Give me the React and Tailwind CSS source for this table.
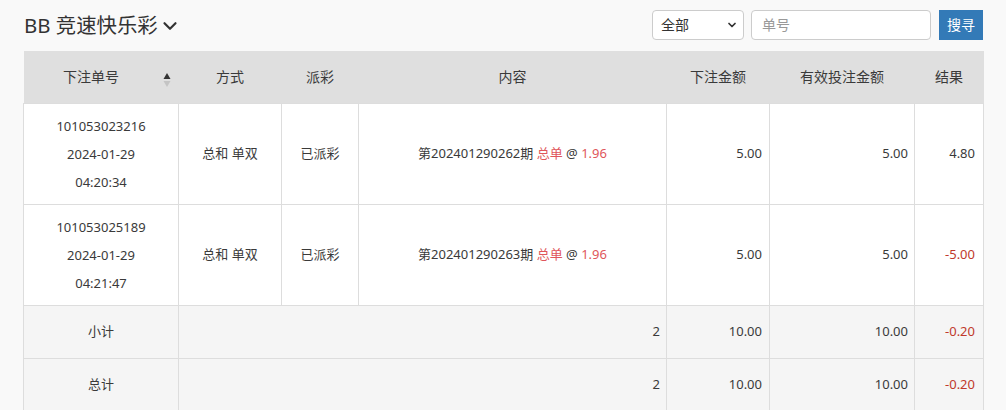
import { ChevronDown } from 'lucide-react';

const rows = [
  {
    id: '101053023216',
    date: '2024-01-29',
    time: '04:20:34',
    way: '总和 单双',
    status: '已派彩',
    issue: '第202401290262期',
    amount: '5.00',
    valid: '5.00',
    result: '4.80',
  },
  {
    id: '101053025189',
    date: '2024-01-29',
    time: '04:21:47',
    way: '总和 单双',
    status: '已派彩',
    issue: '第202401290263期',
    amount: '5.00',
    valid: '5.00',
    result: '-5.00',
  },
];

const totals = [
  { label: '小计', count: '2', amount: '10.00', valid: '10.00', result: '-0.20' },
  { label: '总计', count: '2', amount: '10.00', valid: '10.00', result: '-0.20' },
];

function SortIcon() {
  return (
    <svg width="8" height="16" viewBox="0 0 8 16" className="inline-block">
      <path d="M4 1 L7.5 7 L0.5 7 Z" fill="#333" />
      <path d="M4 15 L7.5 9 L0.5 9 Z" fill="#c4c4c4" />
    </svg>
  );
}

export default function App() {
  return (
    <div
      className="min-h-[410px] bg-[#f9f9f9] px-[23px] text-[#3a3a3a]"
      style={{ fontFamily: '"Noto Sans", "Noto Sans CJK SC", sans-serif' }}
    >
      <div className="flex h-[51px] items-center justify-between">
        <div className="flex items-center pl-px text-[20.4px] leading-none text-[#333]">
          <span>BB 竞速快乐彩</span>
          <ChevronDown size={22} strokeWidth={2.4} className="ml-px mt-px" />
        </div>
        <div className="flex items-center gap-[7px] pb-[2px]">
          <div className="relative">
            <select className="h-[30px] w-[92px] appearance-none rounded border border-[#ccc] bg-white pl-[8px] text-[14px] text-[#333]">
              <option>全部</option>
            </select>
            <ChevronDown
              size={12}
              strokeWidth={3.5}
              className="pointer-events-none absolute right-[6px] top-[9px] text-[#333]"
            />
          </div>
          <input
            placeholder="单号"
            className="h-[30px] w-[180px] rounded border border-[#ccc] bg-white px-[10px] text-[14px] placeholder:text-[#999]"
          />
          <button className="ml-px h-[30px] w-[44px] bg-[#337ab7] text-[14px] text-white">搜寻</button>
        </div>
      </div>

      <table className="w-[960px] table-fixed border-collapse text-[13px]">
        <colgroup>
          <col className="w-[155px]" />
          <col className="w-[103px]" />
          <col className="w-[77px]" />
          <col className="w-[308px]" />
          <col className="w-[103px]" />
          <col className="w-[145px]" />
          <col className="w-[69px]" />
        </colgroup>
        <thead>
          <tr className="h-[52px] bg-[#dfdfdf] text-[14px] font-normal">
            <th className="relative font-normal">
              <span className="pr-[20px]">下注单号</span>
              <span className="absolute right-[8px] top-[17px]">
                <SortIcon />
              </span>
            </th>
            <th className="font-normal">方式</th>
            <th className="font-normal">派彩</th>
            <th className="font-normal">内容</th>
            <th className="font-normal">下注金额</th>
            <th className="font-normal">有效投注金额</th>
            <th className="font-normal">结果</th>
          </tr>
        </thead>
        <tbody>
          {rows.map((r) => (
            <tr key={r.id} className="h-[101px] bg-white">
              <td className="border border-[#ddd] py-2 text-center leading-[28px]">
                <div>{r.id}</div>
                <div>{r.date}</div>
                <div>{r.time}</div>
              </td>
              <td className="border border-[#ddd] text-center">{r.way}</td>
              <td className="border border-[#ddd] text-center">{r.status}</td>
              <td className="border border-[#ddd] text-center">
                {r.issue} <span className="text-[#e0565b]">总单</span> @{' '}
                <span className="text-[#e0565b]">1.96</span>
              </td>
              <td className="border border-[#ddd] pr-[7px] text-right">{r.amount}</td>
              <td className="border border-[#ddd] pr-[6px] text-right">{r.valid}</td>
              <td
                className={
                  r.result.startsWith('-')
                    ? 'border border-[#ddd] pr-[8px] text-right text-[#c0392b]'
                    : 'border border-[#ddd] pr-[8px] text-right'
                }
              >
                {r.result}
              </td>
            </tr>
          ))}
          {totals.map((t) => (
            <tr key={t.label} className="h-[53px] bg-[#f5f5f5]">
              <td className="border border-[#ddd] text-center">{t.label}</td>
              <td colSpan={3} className="border border-[#ddd] pr-[6px] text-right">
                {t.count}
              </td>
              <td className="border border-[#ddd] pr-[7px] text-right">{t.amount}</td>
              <td className="border border-[#ddd] pr-[6px] text-right">{t.valid}</td>
              <td className="border border-[#ddd] pr-[8px] text-right text-[#c0392b]">{t.result}</td>
            </tr>
          ))}
        </tbody>
      </table>
    </div>
  );
}
